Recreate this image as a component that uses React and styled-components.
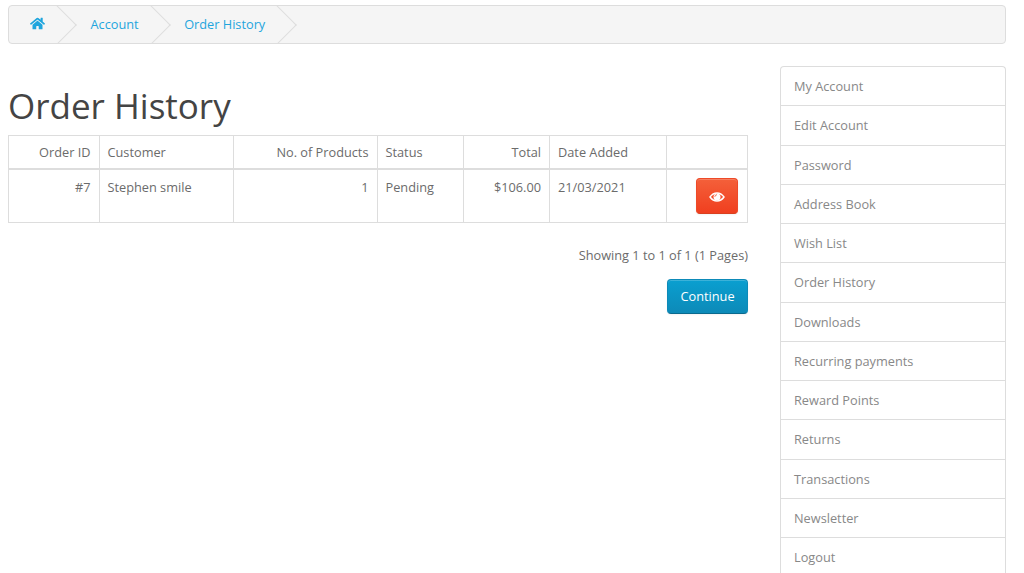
import React from 'react';
import styled, { createGlobalStyle } from 'styled-components';
import { FaHome } from 'react-icons/fa';

const GlobalStyle = createGlobalStyle`
  html, body {
    margin: 0;
    height: 573px;
    overflow: hidden;
    background: #fff;
    font-family: "Open Sans", sans-serif;
    font-size: 12.75px;
    color: #6b6b6b;
  }
`;

const Page = styled.div`
  padding: 5px 18px 0 8px;
`;

// Breadcrumb bar with chevron separators
const Breadcrumb = styled.ul`
  display: flex;
  align-items: center;
  height: 39px;
  box-sizing: border-box;
  margin: 0;
  padding: 0;
  list-style: none;
  background: #f5f5f5;
  border: 1px solid #ddd;
  border-radius: 4px;
  overflow: hidden;
`;

const Crumb = styled.li`
  position: relative;
  display: flex;
  align-items: center;
  height: 100%;
  padding: 0 20px;
  margin-right: 5.5px;

  &::after {
    content: '';
    position: absolute;
    top: 4.5px;
    right: -6px;
    width: 28px;
    height: 28px;
    box-sizing: border-box;
    border-right: 1px solid #ddd;
    border-bottom: 1px solid #ddd;
    transform: rotate(-45deg);
  }
`;

const HomeLink = styled.a`
  display: flex;
  color: #1fa5dd;
  margin: 0 0 2px 1px;
`;

const CrumbLink = styled.a`
  color: #1fa5dd;
  text-decoration: none;
  line-height: 18px;
  margin-bottom: 2px;
`;

const Columns = styled.div`
  display: grid;
  grid-template-columns: 740px 226px;
  column-gap: 32px;
  margin-top: 22px;
`;

const Main = styled.main`
  min-width: 0;
`;

const Title = styled.h1`
  margin: 21px 0 11px;
  font-size: 35px;
  font-weight: 400;
  line-height: 37px;
  color: #444;
`;

const OrderTable = styled.table`
  width: 740px;
  table-layout: fixed;
  border-collapse: collapse;
`;

const Column = styled.col`
  width: ${(p) => p.$width}px;
`;

const Th = styled.td`
  height: 33px;
  box-sizing: border-box;
  padding: 0 8px;
  border: 1px solid #ddd;
  border-bottom: 2px solid #ddd;
  text-align: ${(p) => p.$align || 'left'};
  line-height: 18px;
`;

const Td = styled.td`
  height: 52px;
  box-sizing: border-box;
  padding: 8px;
  border: 1px solid #ddd;
  vertical-align: top;
  text-align: ${(p) => p.$align || 'left'};
  line-height: 18px;
`;

const ViewButton = styled.a`
  display: flex;
  align-items: center;
  justify-content: center;
  width: 42px;
  height: 36px;
  box-sizing: border-box;
  margin: 0 1px 0 auto;
  padding-top: 2px;
  background: linear-gradient(to bottom, #f4603a, #f03f1f);
  border: 1px solid #ee4a28;
  border-bottom-color: #d9401f;
  border-radius: 4px;
  box-shadow: inset 0 1px 0 rgba(255, 255, 255, 0.2), 0 1px 2px rgba(0, 0, 0, 0.05);
`;

const Results = styled.p`
  margin: 23px 0 0;
  text-align: right;
  line-height: 18px;
`;

const Buttons = styled.div`
  display: flex;
  justify-content: flex-end;
  margin-top: 15px;
`;

const PrimaryButton = styled.a`
  display: flex;
  align-items: center;
  justify-content: center;
  width: 81px;
  height: 35px;
  box-sizing: border-box;
  color: #fff;
  text-decoration: none;
  background: linear-gradient(to bottom, #0a9fd0, #0d8ab8);
  border: 1px solid #0d8ab8;
  border-bottom-color: #0a6a8e;
  border-radius: 4px;
  box-shadow: inset 0 1px 0 rgba(255, 255, 255, 0.2), 0 1px 2px rgba(0, 0, 0, 0.05);
`;

const Sidebar = styled.aside`
  display: flex;
  flex-direction: column;
  border: 1px solid #ddd;
  border-bottom: 0;
  border-radius: 4px 4px 0 0;
`;

const SideLink = styled.a`
  display: flex;
  align-items: center;
  height: 39.25px;
  flex: none;
  box-sizing: border-box;
  padding: 0 13px;
  border-bottom: 1px solid #ddd;
  color: #888;
  text-decoration: none;
`;

// Outlined eye with a white pupil and a small highlight
const EyeIcon = () => (
  <svg width="16" height="10" viewBox="0 0 16 10">
    <path d="M1 5C3 2.2 5.3 1 8 1s5 1.2 7 4c-2 2.800-4.300 4-7 4S3 7.800 1 5Z" fill="none" stroke="#fff" strokeWidth="1.400" />
    <circle cx="8" cy="5" r="3.500" fill="#fff" />
    <path d="M5.800 4.800A2.300 2.300 0 0 1 8 2.700" fill="none" stroke="#f4603a" strokeWidth="0.900" />
  </svg>
);

const columns = [
  { width: 90.5 },
  { width: 134.5 },
  { width: 143.5 },
  { width: 86.5 },
  { width: 86 },
  { width: 117 },
  { width: 81 },
];

const accountLinks = [
  'My Account',
  'Edit Account',
  'Password',
  'Address Book',
  'Wish List',
  'Order History',
  'Downloads',
  'Recurring payments',
  'Reward Points',
  'Returns',
  'Transactions',
  'Newsletter',
  'Logout',
];

const App = () => {
  return (
    <Page>
      <GlobalStyle />
      <Breadcrumb>
        <Crumb>
          <HomeLink href="#"><FaHome size={15} /></HomeLink>
        </Crumb>
        <Crumb>
          <CrumbLink href="#">Account</CrumbLink>
        </Crumb>
        <Crumb>
          <CrumbLink href="#">Order History</CrumbLink>
        </Crumb>
      </Breadcrumb>
      <Columns>
        <Main>
          <Title>Order History</Title>
          <OrderTable>
            <colgroup>
              {columns.map((col, index) => (
                <Column key={index} $width={col.width} />
              ))}
            </colgroup>
            <thead>
              <tr>
                <Th $align="right">Order ID</Th>
                <Th>Customer</Th>
                <Th $align="right">No. of Products</Th>
                <Th>Status</Th>
                <Th $align="right">Total</Th>
                <Th>Date Added</Th>
                <Th />
              </tr>
            </thead>
            <tbody>
              <tr>
                <Td $align="right">#7</Td>
                <Td>Stephen smile</Td>
                <Td $align="right">1</Td>
                <Td>Pending</Td>
                <Td $align="right">$106.00</Td>
                <Td>21/03/2021</Td>
                <Td><ViewButton href="#"><EyeIcon /></ViewButton></Td>
              </tr>
            </tbody>
          </OrderTable>
          <Results>Showing 1 to 1 of 1 (1 Pages)</Results>
          <Buttons>
            <PrimaryButton href="#">Continue</PrimaryButton>
          </Buttons>
        </Main>
        <Sidebar>
          {accountLinks.map((link) => (
            <SideLink href="#" key={link}>{link}</SideLink>
          ))}
        </Sidebar>
      </Columns>
    </Page>
  );
};

export default App;
